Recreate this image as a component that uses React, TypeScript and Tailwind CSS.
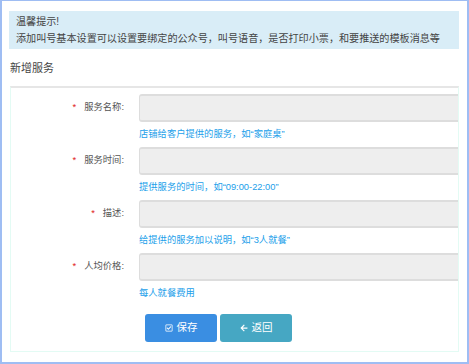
import { FaRegCheckSquare, FaArrowLeft } from "react-icons/fa";

const App = () => {
  const fields = [
    { label: "服务名称", help: "店铺给客户提供的服务，如“家庭桌”" },
    { label: "服务时间", help: "提供服务的时间，如“09:00-22:00”" },
    { label: "描述", help: "给提供的服务加以说明，如“3人就餐”" },
    { label: "人均价格", help: "每人就餐费用" },
  ];

  return (
    <div
      className="w-[469px] h-[364px] bg-white border-2 border-t border-[#9fbdf3] overflow-hidden text-[9.3px] text-[#555]"
      style={{ fontFamily: '"Liberation Sans", "Noto Sans CJK SC", sans-serif' }}
    >
      <div className="pl-[7px] pr-[8px] pt-[10px]">
        {/* Alert */}
        <div className="bg-[#d9edf7] h-[38px] pl-[7px] pt-[2px] text-[10.1px] text-[#444] leading-[17px] whitespace-nowrap">
          <div>温馨提示!</div>
          <div>添加叫号基本设置可以设置要绑定的公众号，叫号语音，是否打印小票，和要推送的模板消息等</div>
        </div>

        {/* Title */}
        <div className="pl-px h-[37px] pt-px flex items-center text-[11px] text-[#444]">新增服务</div>

        {/* Form panel */}
        <div className="ml-px border-t-2 border-t-[#e6e6e6] border-l border-r border-b border-[#e3fbf4] pt-[6px] pb-[9px]">
          {fields.map((f) => (
            <div key={f.label}>
              <div className="flex items-center h-[28px]">
                <div className="w-[128px] pr-[15px] text-right">
                  <span className="text-[#e02020] mr-[8px]">*</span>
                  {f.label}:
                </div>
                <div className="flex-1 h-[28px] bg-[#eeeeee] border-y-2 border-[#dddddd] border-l rounded-l-[3px]" />
              </div>
              <div className="pl-[128px] h-[25px] leading-[25px] text-[#22a0ea]">{f.help}</div>
            </div>
          ))}

          <div className="flex gap-[3px] pl-[134px] mt-[8px]">
            <button className="w-[72px] h-[28px] rounded-[3px] bg-[#3a8ee2] text-white text-[10.5px] flex items-center justify-center gap-[4px]">
              <FaRegCheckSquare className="w-[8px] h-[8px]" />
              保存
            </button>
            <button className="w-[72px] h-[28px] rounded-[3px] bg-[#46a7c3] text-white text-[10.5px] flex items-center justify-center gap-[4px]">
              <FaArrowLeft className="w-[8px] h-[8px]" />
              返回
            </button>
          </div>
        </div>
      </div>
    </div>
  );
};

export default App;
